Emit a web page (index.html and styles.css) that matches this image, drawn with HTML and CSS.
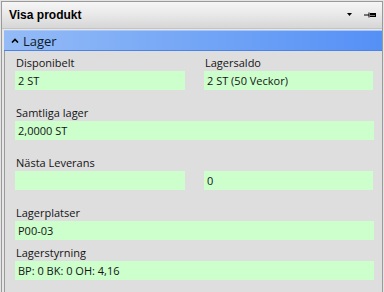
FILE: index.html
```html
<!DOCTYPE html>
<html lang="sv">
<head>
    <meta charset="UTF-8">
    <title>Visa produkt</title>
    <link rel="stylesheet" href="styles.css">
</head>
<body>
    <div class="panel">
        <div class="panel-header">
            <span class="title">Visa produkt</span>
            <span class="tools">
                <svg width="6" height="4" viewBox="0 0 6 4"><path d="M0 0H5L2.5 3Z" fill="#000"/></svg>
                <svg width="12" height="6" viewBox="0 0 12 6"><path d="M0 3H5" stroke="#000" stroke-width="1"/><path d="M5 0.5V5.5" stroke="#000"/><rect x="6" y="1" width="6" height="4" fill="#000"/><path d="M6 3.5H11" stroke="#777"/></svg>
            </span>
        </div>

        <div class="section">
            <div class="section-bar">
                <svg width="8" height="5" viewBox="0 0 8 5"><path d="M1 4.5L4 1.5L7 4.5" fill="none" stroke="#000" stroke-width="1.6"/></svg>
                <span>Lager</span>
            </div>

            <div class="section-body">
                <div class="row cols">
                    <div class="field">
                        <div class="label">Disponibelt</div>
                        <div class="value">2 ST</div>
                    </div>
                    <div class="field">
                        <div class="label">Lagersaldo</div>
                        <div class="value">2 ST (50 Veckor)</div>
                    </div>
                </div>

                <div class="row">
                    <div class="field">
                        <div class="label">Samtliga lager</div>
                        <div class="value">2,0000 ST</div>
                    </div>
                </div>

                <div class="row cols">
                    <div class="field">
                        <div class="label">Nästa Leverans</div>
                        <div class="value"></div>
                    </div>
                    <div class="field">
                        <div class="label"></div>
                        <div class="value">0</div>
                    </div>
                </div>

                <div class="row tight">
                    <div class="field">
                        <div class="label">Lagerplatser</div>
                        <div class="value">P00-03</div>
                    </div>
                </div>

                <div class="row">
                    <div class="field">
                        <div class="label">Lagerstyrning</div>
                        <div class="value">BP: 0 BK: 0 OH: 4,16</div>
                    </div>
                </div>
            </div>
        </div>
    </div>
</body>
</html>
```

FILE: styles.css
```css
* {
    margin: 0;
    padding: 0;
    box-sizing: border-box;
}

body {
    background: #e4e4e4;
    font-family: "Open Sans", "Noto Sans", Arial, sans-serif;
    font-size: 12px;
    color: #141414;
    overflow: hidden;
}

.panel {
    margin: 1px 1px 0 1px;
    border: 1px solid #9a9a9a;
    border-bottom: none;
    height: 291px;
    background: #e6e6e6;
}

.panel-header {
    height: 27px;
    display: flex;
    align-items: center;
    justify-content: space-between;
    padding: 0 6px 0 7px;
    background: linear-gradient(#f6f6f6, #e8e8e8 50%, #d6d6d6);
    border-bottom: 1px solid #c4c4c4;
}

.title {
    font-family: "Liberation Sans", Arial, sans-serif;
    font-weight: bold;
    font-size: 12px;
    color: #000;
}

.tools {
    display: flex;
    align-items: center;
    gap: 11px;
}

.section {
    margin: 1px 0 0 2px;
    height: 262px;
    border-left: 1px solid #9a9a9a;
    background: #dedede;
}

.section-bar {
    height: 21px;
    display: flex;
    align-items: center;
    gap: 4px;
    padding-left: 7px;
    margin-left: -1px;
    background: linear-gradient(to right, #94bbf6, #6ea2f6 60%, #5590f6);
    border-top: 1px solid #a8c6f6;
    border-bottom: 1px solid #4a84e8;
    font-size: 13px;
    color: #0e1a2a;
}

.section-body {
    padding: 4px 8px 0 10px;
}

.row {
    margin-bottom: 15px;
}

.row.tight {
    margin-bottom: 5px;
}

.row.cols {
    display: grid;
    grid-template-columns: 170px 169px;
    column-gap: 19px;
}

.label {
    height: 16px;
    line-height: 15px;
    padding-left: 1px;
    font-size: 11px;
}

.value {
    height: 19px;
    line-height: 19px;
    padding-left: 3px;
    background: #ccffcc;
    font-size: 11px;
}
```
